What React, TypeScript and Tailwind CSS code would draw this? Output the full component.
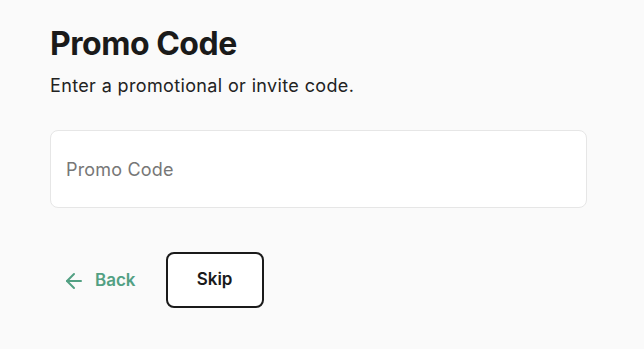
import { ArrowLeft } from "lucide-react";

export default function App() {
  return (
    <div className="min-h-[349px] bg-[#fafafa] px-[50px] pt-[24px] font-['Inter',sans-serif] text-[#1a1a1a]">
      <h1 className="text-[32px] font-bold leading-[40px] tracking-[-0.015em]">Promo Code</h1>
      <p className="mt-[10px] text-[18px] leading-[24px] tracking-[0.02em] text-[#222]">Enter a promotional or invite code.</p>
      <input
        type="text"
        placeholder="Promo Code"
        className="mt-[32px] block h-[78px] w-[537px] rounded-[8px] border border-[#e6e6e6] bg-white px-[15px] text-[18px] tracking-[0.01em] text-[#222] placeholder:text-[#777] outline-none"
      />
      <div className="mt-[44px] flex items-center pl-[12px]">
        <button className="flex items-center gap-[9px] pt-[2px] text-[17px] font-semibold text-[#52a083]">
          <ArrowLeft className="h-[24px] w-[24px]" strokeWidth={2} />
          Back
        </button>
        <button className="ml-[30px] h-[56px] w-[98px] rounded-[8px] border-2 border-[#1a1a1a] bg-white text-[17px] font-semibold text-[#1a1a1a]">
          Skip
        </button>
      </div>
    </div>
  );
}
